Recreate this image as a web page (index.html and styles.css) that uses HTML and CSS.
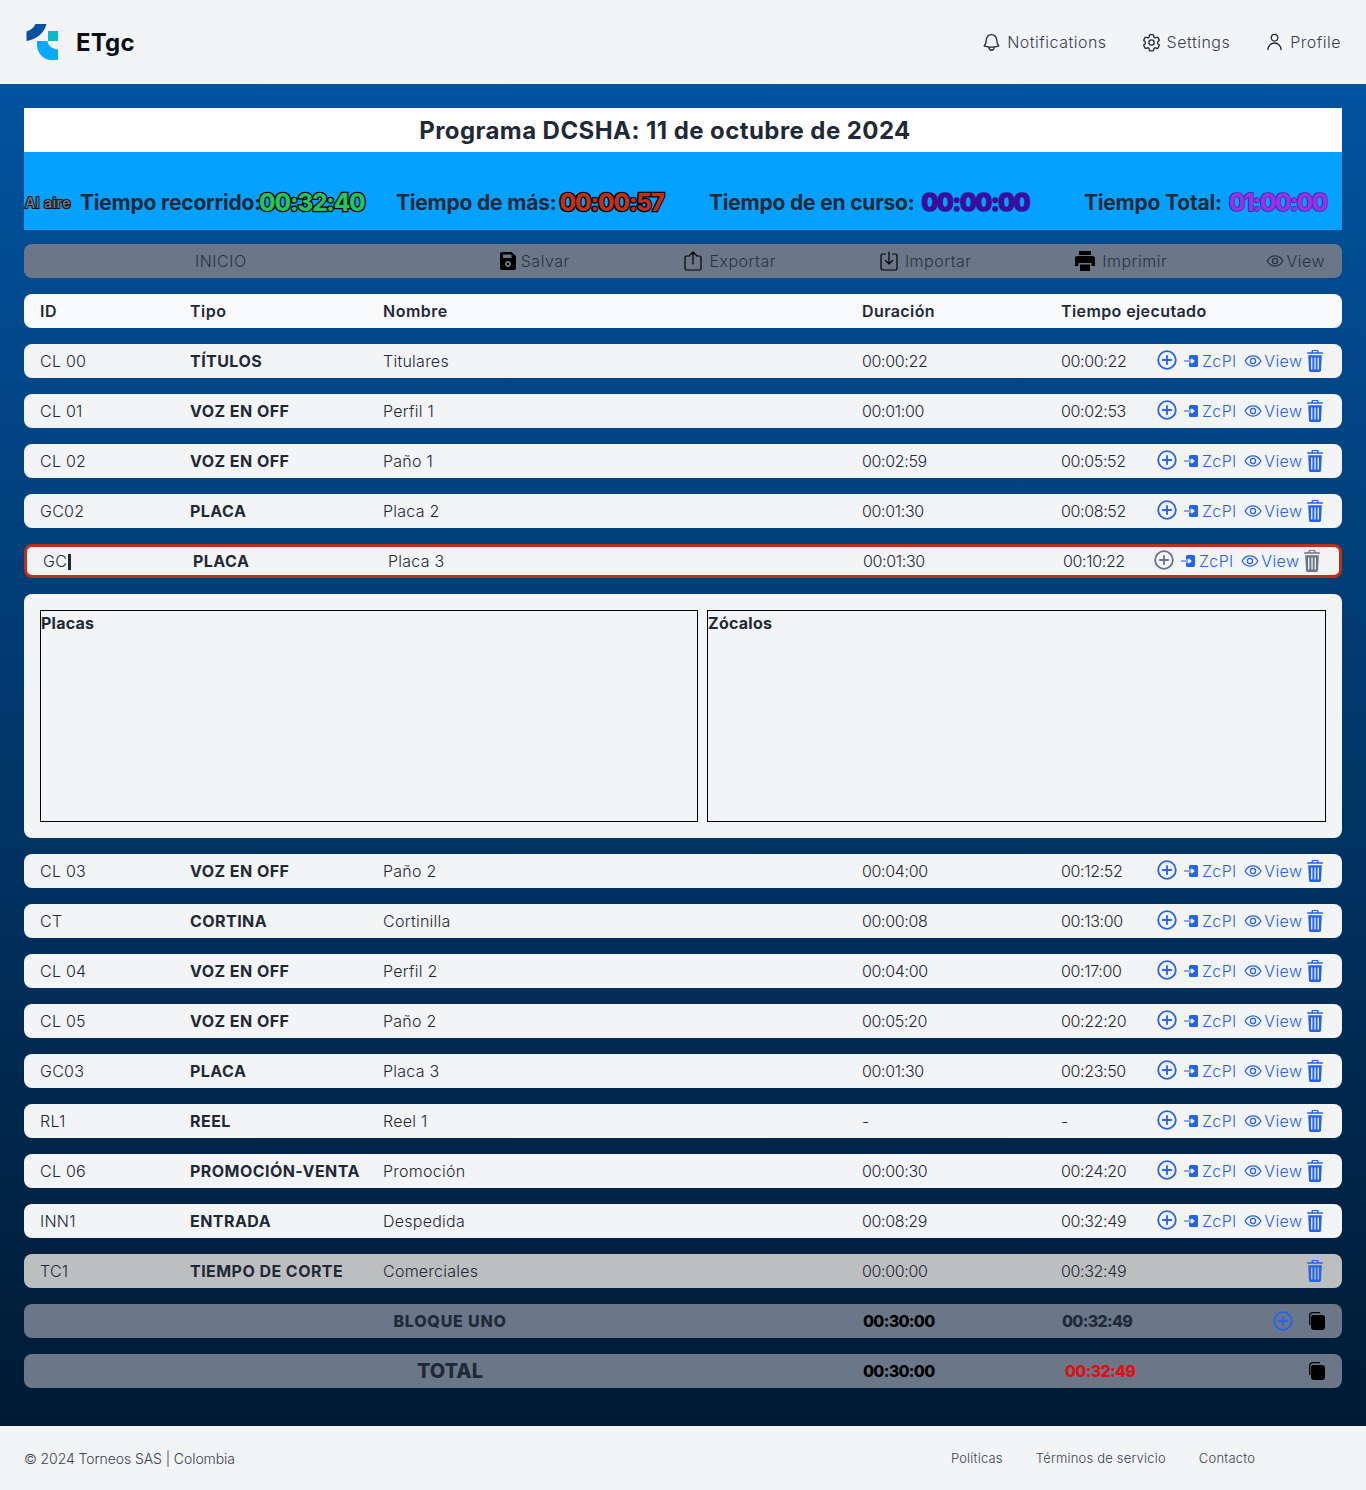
FILE: index.html
```html
<!DOCTYPE html>
<html lang="es">
<head>
  <meta charset="UTF-8">
  <title>ETgc</title>
  <link rel="stylesheet" href="styles.css">
</head>
<body>

<svg class="sprites" width="0" height="0">
  <symbol id="i-plus" viewBox="0 0 20 20"><circle cx="10" cy="10" r="8.8" fill="none" stroke="currentColor" stroke-width="1.8"/><path d="M10 5.800v8.400M5.800 10h8.400" fill="none" stroke="currentColor" stroke-width="1.8" stroke-linecap="round"/></symbol>
  <symbol id="i-zc" viewBox="0 0 14 12"><path fill="currentColor" d="M5 1.500A1.500 1.500 0 0 1 6.500 0h6A1.500 1.500 0 0 1 14 1.500v9a1.500 1.500 0 0 1-1.500 1.500h-6A1.500 1.500 0 0 1 5 10.500V7.500h2.500v1.600L10.800 6 7.500 2.900v1.600H5z"/><path fill="currentColor" opacity=".75" d="M0 5.300h7v1.400H0z"/></symbol>
  <symbol id="i-eye" viewBox="0 0 24 24"><path fill="none" stroke="currentColor" stroke-width="1.700" d="M1.500 12C4 7.500 7.700 5.200 12 5.200s8 2.300 10.500 6.800c-2.500 4.500-6.200 6.800-10.500 6.800S4 16.500 1.500 12z"/><circle cx="12" cy="12" r="3.400" fill="none" stroke="currentColor" stroke-width="1.700"/></symbol>
  <symbol id="i-trash" viewBox="0 0 16 22"><path fill="currentColor" d="M5.500 0h5a1 1 0 0 1 1 1v1.200H15a1 1 0 0 1 1 1v.6H0v-.6a1 1 0 0 1 1-1h3.500V1a1 1 0 0 1 1-1zm.4 1.100v1.100h4.200V1.100zM1.200 5.200h13.600l-.8 15.300A1.600 1.600 0 0 1 12.400 22H3.600A1.600 1.600 0 0 1 2 20.500zm2.900 2.200v12.200h1.300V7.400zm3.300 0v12.200h1.300V7.400zm3.200 0v12.200h1.300V7.400z"/></symbol>
  <symbol id="i-copy" viewBox="0 0 16 18"><path fill="currentColor" d="M4 3h9a3 3 0 0 1 3 3v9a3 3 0 0 1-3 3H5a3 3 0 0 1-3-3V5a2 2 0 0 1 2-2z"/><path fill="none" stroke="currentColor" stroke-width="1.300" d="M.7 13V3.500A2.800 2.800 0 0 1 3.500.7H11"/></symbol>
</svg>

<header class="topbar">
  <a class="brand">
    <svg class="brand-logo" viewBox="0 0 33 36" width="33" height="36">
      <path fill="#02529f" d="M0.500 7.500C5 6 7.500 4 9.500 0H20.500C18 9.500 10 15.500 0.500 17z"/>
      <rect x="22" y="7" width="10" height="10" fill="#0cb9c6"/>
      <path fill="#06a9ff" d="M11 17H21.500C22 21.500 26 25 32 25.500V36H24C17 35 11.500 29 11 22z"/>
    </svg>
    <span>ETgc</span>
  </a>
  <nav class="topnav">
    <a>
      <svg viewBox="0 0 24 24" width="21" height="21"><path d="M14.900 17.100a24 24 0 0 0 5.500-1.300A9 9 0 0 1 18 9.700V9a6 6 0 0 0-12 0v.7a9 9 0 0 1-2.400 6.100c1.700.6 3.600 1.100 5.500 1.300m5.800 0a24 24 0 0 1-5.800 0m5.800 0a3 3 0 1 1-5.800 0"/></svg>
      Notifications
    </a>
    <a>
      <svg viewBox="0 0 24 24" width="21" height="21"><path d="M9.600 3.900c.1-.5.600-.9 1.100-.9h2.600c.5 0 1 .4 1.100.9l.2 1.300c.1.400.3.700.6.900l.5.300c.3.200.7.200 1.100.1l1.200-.5c.5-.2 1.100 0 1.400.5l1.300 2.200c.3.500.2 1.100-.3 1.400l-1 .8c-.3.300-.5.700-.4 1.100v.6c0 .4.100.8.400 1.100l1 .8c.5.300.6.900.3 1.400l-1.300 2.200c-.3.500-.9.700-1.400.5l-1.200-.5c-.4-.1-.8-.1-1.100.1l-.5.300c-.3.200-.5.500-.6.900l-.2 1.300c-.1.500-.6.900-1.100.9h-2.600c-.5 0-1-.4-1.100-.9l-.2-1.300c-.1-.4-.3-.7-.6-.9l-.5-.3c-.3-.2-.7-.2-1.100-.1l-1.200.5c-.5.200-1.100 0-1.400-.5l-1.300-2.200c-.3-.5-.2-1.100.3-1.400l1-.8c.3-.3.500-.7.400-1.100v-.6c0-.4-.1-.8-.4-1.100l-1-.8c-.5-.3-.6-.9-.3-1.400l1.300-2.200c.3-.5.900-.7 1.400-.5l1.200.5c.4.100.8.100 1.100-.1l.5-.3c.3-.2.500-.5.600-.9z"/><circle cx="12" cy="12" r="3"/></svg>
      Settings
    </a>
    <a>
      <svg viewBox="0 0 24 24" width="21" height="21"><path d="M15.800 6a3.800 3.800 0 1 1-7.500 0 3.800 3.800 0 0 1 7.500 0zM4.500 20.100a7.500 7.500 0 0 1 15 0"/></svg>
      Profile
    </a>
  </nav>
</header>

<main class="content">
  <h1 class="title">Programa DCSHA: 11 de octubre de 2024</h1>

  <div class="timers">
    <span class="on-air">Al aire</span>
    <div class="timer"><b>Tiempo recorrido:</b><span class="clock clock-green">00:32:40</span></div>
    <div class="timer"><b>Tiempo de más:</b><span class="clock clock-red">00:00:57</span></div>
    <div class="timer"><b>Tiempo de en curso:</b><span class="clock clock-indigo gap">00:00:00</span></div>
    <div class="timer"><b>Tiempo Total:</b><span class="clock clock-purple gap">01:00:00</span></div>
  </div>

  <div class="toolbar">
    <a class="tool-start">INICIO</a>
    <a>
      <svg viewBox="0 0 16 18" width="16" height="18"><path fill="#000" d="M2 0h9.500L16 4v12a2 2 0 0 1-2 2H2a2 2 0 0 1-2-2V2a2 2 0 0 1 2-2zm1 2.500v3.500h8.500V2.500zM8 9a3 3 0 1 0 0 6 3 3 0 0 0 0-6zm0 1.800a1.200 1.200 0 1 1 0 2.400 1.200 1.200 0 0 1 0-2.400z"/></svg>
      Salvar
    </a>
    <a class="tool-wide">
      <svg viewBox="0 0 18 20" width="18" height="20" class="line"><path d="M5.500 5H2.500A1.500 1.500 0 0 0 1 6.500v11A1.500 1.500 0 0 0 2.500 19h13a1.500 1.500 0 0 0 1.500-1.500v-11A1.500 1.500 0 0 0 15.500 5h-3M9 13V1M5.500 4.500 9 1l3.500 3.500"/></svg>
      Exportar
    </a>
    <a class="tool-wide">
      <svg viewBox="0 0 18 20" width="18" height="20" class="line"><path d="M5.500 3H2.500A1.500 1.500 0 0 0 1 4.500v13A1.500 1.500 0 0 0 2.500 19h13a1.500 1.500 0 0 0 1.500-1.500v-13A1.500 1.500 0 0 0 15.500 3h-3M9 1v12M5.500 9.500 9 13l3.500-3.500"/></svg>
      Importar
    </a>
    <a class="tool-wide">
      <svg viewBox="0 0 20 20" width="20" height="20"><path fill="#000" d="M4 0h12v4H4zM2.500 5h15A2.500 2.500 0 0 1 20 7.500V15h-3.500v-3h-13v3H0V7.500A2.500 2.500 0 0 1 2.500 5zM5 13.500h10V20H5z"/></svg>
      Imprimir
    </a>
    <a class="tool-view">
      <svg width="18" height="18"><use href="#i-eye"/></svg>
      View
    </a>
  </div>

  <div class="row row-head">
    <span>ID</span><span>Tipo</span><span>Nombre</span><span>Duración</span><span class="wide">Tiempo ejecutado</span>
  </div>

  <div class="row">
    <span>CL 00</span><b>TÍTULOS</b><span>Titulares</span><span>00:00:22</span><span>00:00:22</span>
    <div class="actions">
      <svg class="a-plus"><use href="#i-plus"/></svg><svg class="a-zc"><use href="#i-zc"/></svg><span class="a-text">ZcPl</span><svg class="a-eye"><use href="#i-eye"/></svg><span class="a-text">View</span><svg class="a-trash"><use href="#i-trash"/></svg>
    </div>
  </div>
  <div class="row">
    <span>CL 01</span><b>VOZ EN OFF</b><span>Perfil 1</span><span>00:01:00</span><span>00:02:53</span>
    <div class="actions">
      <svg class="a-plus"><use href="#i-plus"/></svg><svg class="a-zc"><use href="#i-zc"/></svg><span class="a-text">ZcPl</span><svg class="a-eye"><use href="#i-eye"/></svg><span class="a-text">View</span><svg class="a-trash"><use href="#i-trash"/></svg>
    </div>
  </div>
  <div class="row">
    <span>CL 02</span><b>VOZ EN OFF</b><span>Paño 1</span><span>00:02:59</span><span>00:05:52</span>
    <div class="actions">
      <svg class="a-plus"><use href="#i-plus"/></svg><svg class="a-zc"><use href="#i-zc"/></svg><span class="a-text">ZcPl</span><svg class="a-eye"><use href="#i-eye"/></svg><span class="a-text">View</span><svg class="a-trash"><use href="#i-trash"/></svg>
    </div>
  </div>
  <div class="row">
    <span>GC02</span><b>PLACA</b><span>Placa 2</span><span>00:01:30</span><span>00:08:52</span>
    <div class="actions">
      <svg class="a-plus"><use href="#i-plus"/></svg><svg class="a-zc"><use href="#i-zc"/></svg><span class="a-text">ZcPl</span><svg class="a-eye"><use href="#i-eye"/></svg><span class="a-text">View</span><svg class="a-trash"><use href="#i-trash"/></svg>
    </div>
  </div>

  <div class="row row-active">
    <span>GC<i class="caret"></i></span><b>PLACA</b><span>Placa 3</span><span>00:01:30</span><span>00:10:22</span>
    <div class="actions muted">
      <svg class="a-plus"><use href="#i-plus"/></svg><svg class="a-zc"><use href="#i-zc"/></svg><span class="a-text">ZcPl</span><svg class="a-eye"><use href="#i-eye"/></svg><span class="a-text">View</span><svg class="a-trash"><use href="#i-trash"/></svg>
    </div>
  </div>

  <section class="panel">
    <div class="panel-box"><b>Placas</b></div>
    <div class="panel-box"><b>Zócalos</b></div>
  </section>

  <div class="row">
    <span>CL 03</span><b>VOZ EN OFF</b><span>Paño 2</span><span>00:04:00</span><span>00:12:52</span>
    <div class="actions">
      <svg class="a-plus"><use href="#i-plus"/></svg><svg class="a-zc"><use href="#i-zc"/></svg><span class="a-text">ZcPl</span><svg class="a-eye"><use href="#i-eye"/></svg><span class="a-text">View</span><svg class="a-trash"><use href="#i-trash"/></svg>
    </div>
  </div>
  <div class="row">
    <span>CT</span><b>CORTINA</b><span>Cortinilla</span><span>00:00:08</span><span>00:13:00</span>
    <div class="actions">
      <svg class="a-plus"><use href="#i-plus"/></svg><svg class="a-zc"><use href="#i-zc"/></svg><span class="a-text">ZcPl</span><svg class="a-eye"><use href="#i-eye"/></svg><span class="a-text">View</span><svg class="a-trash"><use href="#i-trash"/></svg>
    </div>
  </div>
  <div class="row">
    <span>CL 04</span><b>VOZ EN OFF</b><span>Perfil 2</span><span>00:04:00</span><span>00:17:00</span>
    <div class="actions">
      <svg class="a-plus"><use href="#i-plus"/></svg><svg class="a-zc"><use href="#i-zc"/></svg><span class="a-text">ZcPl</span><svg class="a-eye"><use href="#i-eye"/></svg><span class="a-text">View</span><svg class="a-trash"><use href="#i-trash"/></svg>
    </div>
  </div>
  <div class="row">
    <span>CL 05</span><b>VOZ EN OFF</b><span>Paño 2</span><span>00:05:20</span><span>00:22:20</span>
    <div class="actions">
      <svg class="a-plus"><use href="#i-plus"/></svg><svg class="a-zc"><use href="#i-zc"/></svg><span class="a-text">ZcPl</span><svg class="a-eye"><use href="#i-eye"/></svg><span class="a-text">View</span><svg class="a-trash"><use href="#i-trash"/></svg>
    </div>
  </div>
  <div class="row">
    <span>GC03</span><b>PLACA</b><span>Placa 3</span><span>00:01:30</span><span>00:23:50</span>
    <div class="actions">
      <svg class="a-plus"><use href="#i-plus"/></svg><svg class="a-zc"><use href="#i-zc"/></svg><span class="a-text">ZcPl</span><svg class="a-eye"><use href="#i-eye"/></svg><span class="a-text">View</span><svg class="a-trash"><use href="#i-trash"/></svg>
    </div>
  </div>
  <div class="row">
    <span>RL1</span><b>REEL</b><span>Reel 1</span><span>-</span><span>-</span>
    <div class="actions">
      <svg class="a-plus"><use href="#i-plus"/></svg><svg class="a-zc"><use href="#i-zc"/></svg><span class="a-text">ZcPl</span><svg class="a-eye"><use href="#i-eye"/></svg><span class="a-text">View</span><svg class="a-trash"><use href="#i-trash"/></svg>
    </div>
  </div>
  <div class="row">
    <span>CL 06</span><b>PROMOCIÓN-VENTA</b><span>Promoción</span><span>00:00:30</span><span>00:24:20</span>
    <div class="actions">
      <svg class="a-plus"><use href="#i-plus"/></svg><svg class="a-zc"><use href="#i-zc"/></svg><span class="a-text">ZcPl</span><svg class="a-eye"><use href="#i-eye"/></svg><span class="a-text">View</span><svg class="a-trash"><use href="#i-trash"/></svg>
    </div>
  </div>
  <div class="row">
    <span>INN1</span><b>ENTRADA</b><span>Despedida</span><span>00:08:29</span><span>00:32:49</span>
    <div class="actions">
      <svg class="a-plus"><use href="#i-plus"/></svg><svg class="a-zc"><use href="#i-zc"/></svg><span class="a-text">ZcPl</span><svg class="a-eye"><use href="#i-eye"/></svg><span class="a-text">View</span><svg class="a-trash"><use href="#i-trash"/></svg>
    </div>
  </div>

  <div class="row row-cut">
    <span>TC1</span><b>TIEMPO DE CORTE</b><span>Comerciales</span><span>00:00:00</span><span>00:32:49</span>
    <div class="actions end">
      <svg class="a-trash"><use href="#i-trash"/></svg>
    </div>
  </div>

  <div class="sum">
    <b class="sum-name">BLOQUE UNO</b>
    <b class="sum-black">00:30:00</b>
    <b>00:32:49</b>
    <div class="sum-icons">
      <svg class="a-plus plus-blue"><use href="#i-plus"/></svg>
      <svg class="a-copy"><use href="#i-copy"/></svg>
    </div>
  </div>
  <div class="sum sum-total">
    <b class="sum-name">TOTAL</b>
    <b class="sum-black">00:30:00</b>
    <b class="sum-red">00:32:49</b>
    <div class="sum-icons">
      <svg class="a-copy"><use href="#i-copy"/></svg>
    </div>
  </div>
</main>

<footer class="footer">
  <span>© 2024 Torneos SAS | Colombia</span>
  <nav class="footer-links">
    <a>Políticas</a>
    <a>Términos de servicio</a>
    <a>Contacto</a>
  </nav>
</footer>

</body>
</html>
```
FILE: styles.css
```css
* {
  box-sizing: border-box;
}

body {
  margin: 0;
  font-family: Inter, "Open Sans", sans-serif;
  font-size: 16px;
  font-weight: 350;
  letter-spacing: .25px;
  color: #1f2937;
  background: #f3f4f6;
}

.sprites {
  position: absolute;
}

/* header */
.topbar {
  height: 84px;
  display: flex;
  align-items: center;
  justify-content: space-between;
  padding: 0 25px 0 26px;
  background: #f3f4f6;
}

.brand {
  display: flex;
  align-items: center;
  gap: 17px;
  font-size: 24px;
  font-weight: 700;
  letter-spacing: .2px;
  color: #0b0f17;
}

.brand-logo {
  display: block;
}

.topnav {
  display: flex;
  gap: 34px;
}

.topnav a {
  display: flex;
  align-items: center;
  gap: 5px;
  letter-spacing: .5px;
  color: #374151;
}

.topnav svg {
  fill: none;
  stroke: #1f2937;
  stroke-width: 1.5;
  stroke-linecap: round;
  stroke-linejoin: round;
}

/* main */
.content {
  height: 1342px;
  padding: 24px;
  background: linear-gradient(#0253a0, #001a33);
}

.title {
  height: 44px;
  margin: 0;
  padding-right: 36px;
  background: #fff;
  font-size: 24px;
  line-height: 46px;
  font-weight: 700;
  letter-spacing: .43px;
  text-align: center;
}

.timers {
  height: 78px;
  display: grid;
  grid-template-columns: 55px 316px 313px 375px 1fr;
  align-items: center;
  padding: 22px 0 0 1px;
  background: #06a0ff;
  margin-bottom: 14px;
}

.on-air {
  font-size: 14px;
  font-weight: 600;
  letter-spacing: .5px;
  color: #6b7280;
  -webkit-text-stroke: 2px #111;
  paint-order: stroke fill;
}

.timer {
  display: flex;
  align-items: center;
}

.timer b {
  font-size: 21px;
  font-weight: 700;
  letter-spacing: -.2px;
}

.clock {
  font-size: 24px;
  font-weight: 800;
  letter-spacing: -1.1px;
  -webkit-text-stroke: 2.5px #000;
  paint-order: stroke fill;
}

.clock.gap {
  margin-left: 7px;
}

.clock-green {
  margin-left: -2px;
  color: #22c55e;
}

.clock-red {
  margin-left: 3px;
  color: #c2301a;
}

.clock-indigo {
  color: #3a0ca3;
  -webkit-text-stroke: 1.5px #2a1590;
}

.clock-purple {
  letter-spacing: -1.6px;
  color: #9333ea;
  -webkit-text-stroke: 1.5px #4c1d95;
}

/* toolbar */
.toolbar {
  height: 34px;
  display: grid;
  grid-template-columns: 413px repeat(4, 195.5px) 1fr;
  align-items: center;
  margin-bottom: 16px;
  border-radius: 8px;
  background: #6b7789;
  letter-spacing: .5px;
  color: #283241;
}

.toolbar a {
  display: flex;
  align-items: center;
  justify-content: center;
  gap: 5px;
}

.toolbar .tool-wide {
  gap: 7px;
}

.toolbar .tool-start {
  justify-content: flex-start;
  padding-left: 171px;
}

.toolbar .tool-view {
  justify-content: flex-end;
  padding-right: 17px;
  gap: 2px;
}

.toolbar svg.line {
  fill: none;
  stroke: #000;
  stroke-width: 1.2;
  stroke-linecap: round;
  stroke-linejoin: round;
}

/* rows */
.row {
  height: 34px;
  display: grid;
  grid-template-columns: 150px 193px 479px 199px 96px 1fr;
  align-items: center;
  margin-bottom: 16px;
  padding-left: 16px;
  border-radius: 8px;
  background: #f3f4f6;
}

.row > :nth-child(4),
.row > :nth-child(5) {
  letter-spacing: -.35px;
}

.row b {
  font-weight: 700;
  letter-spacing: .45px;
  white-space: nowrap;
}

.row-head {
  background: #f8fafc;
  font-weight: 600;
  letter-spacing: .5px;
}

.row-head > :nth-child(4),
.row-head > :nth-child(5) {
  letter-spacing: .4px;
}

.row-head .wide {
  grid-column: 5 / 7;
}

.row-active {
  grid-template-columns: 150px 195px 475px 200px 91px 1fr;
  padding-left: 16px;
  border: 3px solid #bd2f17;
}

.row-cut {
  background: #bdbec0;
}

.caret {
  display: inline-block;
  width: 3px;
  height: 16px;
  margin-left: 1px;
  vertical-align: -3px;
  background: #1f2937;
}

.actions {
  display: flex;
  align-items: center;
  color: #2563eb;
}

.actions.end {
  justify-content: flex-end;
  padding-right: 19px;
}

.a-plus {
  width: 20px;
  height: 20px;
  margin: -2px 7px 0 0;
}

.a-zc {
  width: 14px;
  height: 12px;
  margin-right: 4px;
}

.a-eye {
  width: 18px;
  height: 18px;
  margin: 0 2px 0 8px;
}

.a-trash {
  width: 16px;
  height: 22px;
  margin: -1px 0 0 5px;
}

.muted .a-plus,
.muted .a-trash {
  color: #6b7280;
}

.a-copy {
  width: 16px;
  height: 18px;
  color: #000;
}

.a-text {
  font-size: 16px;
  letter-spacing: .4px;
}

/* summary */
.panel {
  height: 244px;
  display: grid;
  grid-template-columns: 658px 619px;
  gap: 9px;
  margin-bottom: 16px;
  padding: 16px;
  border-radius: 8px;
  background: #f3f4f6;
}

.panel-box {
  padding: 2px 0;
  border: 1px solid #000;
}

.panel-box b {
  font-weight: 700;
}

.sum {
  height: 34px;
  display: grid;
  grid-template-columns: 839px 199px 210px 1fr;
  align-items: center;
  margin-bottom: 16px;
  border-radius: 8px;
  background: #6b7789;
  letter-spacing: -.7px;
}

.sum b {
  font-weight: 800;
}

.sum-name {
  width: 852px;
  letter-spacing: .8px;
  text-align: center;
}

.sum-black {
  color: #000;
}

.sum-red {
  padding-left: 3px;
  color: #e01010;
}

.sum-total .sum-name {
  font-size: 20px;
  letter-spacing: 0;
}

.sum-icons {
  display: flex;
  align-items: center;
  justify-content: flex-end;
  gap: 16px;
  padding-right: 17px;
}

.plus-blue {
  margin: 0;
  color: #2563eb;
}

/* footer */
.footer {
  height: 64px;
  display: flex;
  align-items: center;
  padding: 0 24px;
  background: #f3f4f6;
  font-size: 14px;
  letter-spacing: -.08px;
  color: #374151;
}

.footer-links {
  display: flex;
  gap: 33px;
  margin-left: 716px;
  font-size: 13px;
  letter-spacing: .2px;
}
```
